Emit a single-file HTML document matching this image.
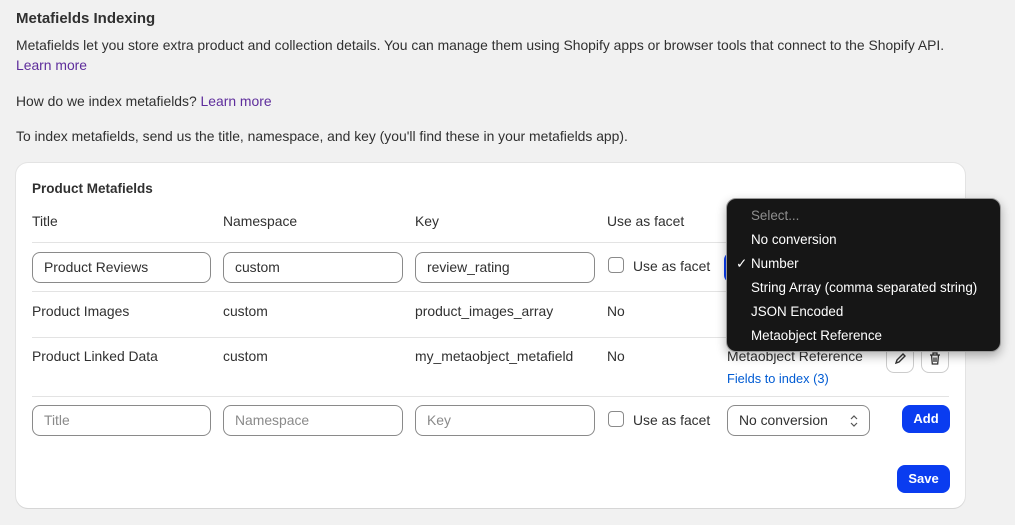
<!DOCTYPE html>
<html><head><style>
*{box-sizing:border-box;margin:0;padding:0}
body{width:1015px;height:525px;background:#f1f1f1;font-family:"Liberation Sans",Arial,sans-serif;color:#303030;font-size:13.9px;position:relative;overflow:hidden}
.a{position:absolute;white-space:nowrap}
.lnk{color:#5e2d9c}
.card{position:absolute;left:16px;top:163px;width:949px;height:345px;background:#fff;border-radius:12px;box-shadow:0 1px 0 #d6d6d6,0 0 0 1px #e3e3e3}
.inp{position:absolute;height:31px;border:1px solid #8a8a8a;border-radius:8px;padding:0 11px;line-height:29px;font-size:13.9px;background:#fff}
.ph{color:#8a8a8a}
.hr{position:absolute;left:32px;width:917px;height:1px;background:#e3e3e3}
.cb{position:absolute;width:16px;height:16px;border:1px solid #8a8a8a;border-radius:4px;background:#fff}
.btn{position:absolute;background:#0a3cf0;color:#fff;font-weight:bold;border-radius:8px;text-align:center;font-size:13px}
.ib{position:absolute;width:28px;height:28px;border:1px solid #ccc;border-radius:8px;background:#fff}
.dd{position:absolute;left:726px;top:198px;width:275px;height:154px;background:#161616;border:1px solid #9a9a9a;border-radius:10px;box-shadow:0 4px 10px rgba(0,0,0,.3);color:#fff;font-size:13.4px}
.dd div{position:absolute;left:24px}
</style></head><body>
<div class="a" style="left:16px;top:10px;font-size:15px;font-weight:bold">Metafields Indexing</div>
<div class="a" style="left:16px;top:37px">Metafields let you store extra product and collection details. You can manage them using Shopify apps or browser tools that connect to the Shopify API.</div>
<div class="a lnk" style="left:16px;top:57px">Learn more</div>
<div class="a" style="left:16px;top:93px">How do we index metafields? <span class="lnk">Learn more</span></div>
<div class="a" style="left:16px;top:128px">To index metafields, send us the title, namespace, and key (you'll find these in your metafields app).</div>
<div class="card"></div>
<div class="a" style="left:32px;top:181px;font-weight:bold;font-size:13.5px">Product Metafields</div>
<div class="a" style="left:32px;top:213px">Title</div>
<div class="a" style="left:223px;top:213px">Namespace</div>
<div class="a" style="left:415px;top:213px">Key</div>
<div class="a" style="left:607px;top:213px">Use as facet</div>
<div class="hr" style="top:242px"></div>
<div class="inp" style="left:32px;top:252px;width:179px">Product Reviews</div>
<div class="inp" style="left:223px;top:252px;width:180px">custom</div>
<div class="inp" style="left:415px;top:252px;width:180px">review_rating</div>
<div class="cb" style="left:608px;top:257px"></div>
<div class="a" style="left:633px;top:258px">Use as facet</div>
<div class="a" style="left:724px;top:252px;width:30px;height:31px;border:2px solid #0a3cf0;border-radius:8px"></div>
<div class="hr" style="top:291px"></div>
<div class="a" style="left:32px;top:303px">Product Images</div>
<div class="a" style="left:223px;top:303px">custom</div>
<div class="a" style="left:415px;top:303px">product_images_array</div>
<div class="a" style="left:607px;top:303px">No</div>
<div class="hr" style="top:337px"></div>
<div class="a" style="left:32px;top:348px">Product Linked Data</div>
<div class="a" style="left:223px;top:348px">custom</div>
<div class="a" style="left:415px;top:348px">my_metaobject_metafield</div>
<div class="a" style="left:607px;top:348px">No</div>
<div class="a" style="left:727px;top:348px">Metaobject Reference</div>
<div class="a" style="left:727px;top:371px;color:#005bd3;font-size:12.8px">Fields to index (3)</div>
<div class="ib" style="left:886px;top:345px"><svg width="26" height="26" viewBox="0 0 26 26"><path d="M9 17l1-3 6-6 2 2-6 6z" fill="none" stroke="#333" stroke-width="1.4"/></svg></div>
<div class="ib" style="left:921px;top:345px"><svg width="26" height="26" viewBox="0 0 26 26"><path d="M8 9h10M11 9V7h4v2M9.5 9l.8 9h5.4l.8-9M12 11.5v4.5M14 11.5v4.5" fill="none" stroke="#333" stroke-width="1.3"/></svg></div>
<div class="hr" style="top:396px"></div>
<div class="inp ph" style="left:32px;top:405px;width:179px">Title</div>
<div class="inp ph" style="left:223px;top:405px;width:180px">Namespace</div>
<div class="inp ph" style="left:415px;top:405px;width:180px">Key</div>
<div class="cb" style="left:608px;top:411px"></div>
<div class="a" style="left:633px;top:412px">Use as facet</div>
<div class="inp" style="left:727px;top:405px;width:143px">No conversion<svg style="position:absolute;right:11px;top:9px" width="8" height="12" viewBox="0 0 8 12"><path d="M1 4l3-3 3 3M1 8l3 3 3-3" fill="none" stroke="#555" stroke-width="1.2"/></svg></div>
<div class="btn" style="left:902px;top:405px;width:48px;height:28px;line-height:28px">Add</div>
<div class="btn" style="left:897px;top:465px;width:53px;height:28px;line-height:28px">Save</div>
<div class="dd">
<div style="top:9px;color:#8f8f8f">Select...</div>
<div style="top:33px">No conversion</div>
<div style="top:57px"><span style="position:absolute;left:-15px">&#10003;</span>Number</div>
<div style="top:81px">String Array (comma separated string)</div>
<div style="top:105px">JSON Encoded</div>
<div style="top:129px">Metaobject Reference</div>
</div>
</body></html>
